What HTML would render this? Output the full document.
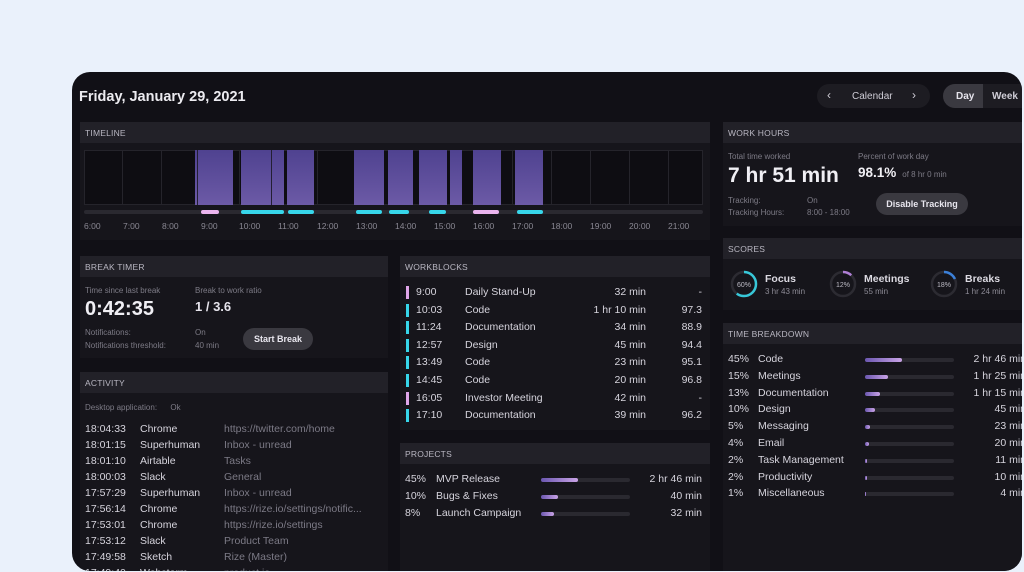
<!DOCTYPE html>
<html><head><meta charset="utf-8"><style>
*{margin:0;padding:0;box-sizing:border-box}
body{width:1024px;height:572px;background:#eaf1fb;position:relative;overflow:hidden;font-family:"Liberation Sans",sans-serif;color:#e6e4ec}
.win{position:absolute;left:72px;top:72px;width:950px;height:499px;background:#111016;border-radius:18px;overflow:hidden}
.a{position:absolute}
.p{position:absolute;background:#16151b}
.h{position:absolute;left:0;right:0;top:0;height:21px;background:#222128;font-size:8.5px;color:#b9b7c2;padding:6px 0 0 5px;letter-spacing:.2px}
.s{font-size:10.5px;color:#dcdae2;white-space:nowrap}
.g{color:#7c7a86}
.t{font-size:8px;color:#7d7b86;white-space:nowrap}
.blk{position:absolute;top:78px;height:55px;background:linear-gradient(#4f4290,#6c5aa6)}
.bar{position:absolute;top:138px;height:4px;border-radius:2px}
.lab{position:absolute;top:149px;font-size:8.5px;color:#8a8893}
.btn{position:absolute;background:#3a3940;border-radius:11px;font-size:9px;font-weight:bold;color:#e8e6ee;text-align:center}
.row{position:absolute;left:0;right:0;height:17px;font-size:10.5px;color:#d6d4dd;white-space:nowrap}
.row span{position:absolute}
.trk{position:absolute;height:4px;background:#2a2930;border-radius:2px}
.fill{position:absolute;left:0;top:0;height:4px;border-radius:2px;background:linear-gradient(90deg,#6b57b0,#c9a3e6)}
</style></head><body>
<div class="win">
<div class="a" style="left:7px;top:17px;font-size:14.5px;font-weight:bold;color:#ecebf0">Friday, January 29, 2021</div>
<div class="a" style="left:745px;top:12px;width:113px;height:24px;background:#1d1c22;border-radius:12px;font-size:10px;color:#cfcdd6"><span class="a" style="left:10px;top:4px;font-size:12px">‹</span><span class="a" style="left:35px;top:7px">Calendar</span><span class="a" style="left:95px;top:4px;font-size:12px">›</span></div>
<div class="a" style="left:871px;top:12px;width:90px;height:24px;background:#1d1c22;border-radius:12px;font-size:10px;font-weight:bold"><div class="a" style="left:0;top:0;width:40px;height:24px;background:#3a3940;border-radius:12px 0 0 12px"></div><span class="a" style="left:13px;top:7px">Day</span><span class="a" style="left:49px;top:7px;color:#cfcdd6">Week</span></div>

<div class="p" style="left:8px;top:50px;width:630px;height:118px"><div class="h">TIMELINE</div></div>
<div class="a" style="left:12px;top:78px;width:619px;height:55px;background:#0e0d12;border:1px solid #25242b"></div>
<div class="a" style="left:12px;top:78px;width:619px;height:55px;background:repeating-linear-gradient(90deg,transparent 0 38px,#25242b 38px 39px)"></div>
<div class="blk" style="left:123px;width:38px"></div><div class="a" style="left:125px;top:78px;width:1px;height:55px;background:#231f33"></div>
<div class="blk" style="left:169px;width:43px"></div><div class="a" style="left:199px;top:78px;width:1px;height:55px;background:#231f33"></div>
<div class="blk" style="left:215px;width:27px"></div>
<div class="blk" style="left:282px;width:30px"></div>
<div class="blk" style="left:316px;width:25px"></div>
<div class="blk" style="left:347px;width:28px"></div>
<div class="blk" style="left:378px;width:12px"></div>
<div class="blk" style="left:401px;width:28px"></div>
<div class="blk" style="left:443px;width:28px"></div>
<div class="bar" style="left:12px;width:619px;background:#2a2930"></div>
<div class="bar" style="left:129px;width:18px;background:#eab4ee"></div>
<div class="bar" style="left:169px;width:43px;background:#37d6ea"></div>
<div class="bar" style="left:216px;width:26px;background:#37d6ea"></div>
<div class="bar" style="left:284px;width:26px;background:#37d6ea"></div>
<div class="bar" style="left:317px;width:20px;background:#37d6ea"></div>
<div class="bar" style="left:357px;width:17px;background:#37d6ea"></div>
<div class="bar" style="left:401px;width:26px;background:#eab4ee"></div>
<div class="bar" style="left:445px;width:26px;background:#37d6ea"></div>
<div class="lab" style="left:12px">6:00</div><div class="lab" style="left:51px">7:00</div><div class="lab" style="left:90px">8:00</div><div class="lab" style="left:129px">9:00</div><div class="lab" style="left:167px">10:00</div><div class="lab" style="left:206px">11:00</div><div class="lab" style="left:245px">12:00</div><div class="lab" style="left:284px">13:00</div><div class="lab" style="left:323px">14:00</div><div class="lab" style="left:362px">15:00</div><div class="lab" style="left:401px">16:00</div><div class="lab" style="left:440px">17:00</div><div class="lab" style="left:479px">18:00</div><div class="lab" style="left:518px">19:00</div><div class="lab" style="left:557px">20:00</div><div class="lab" style="left:596px">21:00</div>

<div class="p" style="left:651px;top:50px;width:310px;height:104px"><div class="h">WORK HOURS</div>
<div class="t a" style="left:5px;top:30px">Total time worked</div>
<div class="a" style="left:5px;top:42px;font-size:21px;font-weight:bold;color:#f0eff4">7 hr 51 min</div>
<div class="t a" style="left:5px;top:74px">Tracking:</div><div class="t a" style="left:84px;top:74px">On</div>
<div class="t a" style="left:5px;top:86px">Tracking Hours:</div><div class="t a" style="left:84px;top:86px">8:00 - 18:00</div>
<div class="t a" style="left:135px;top:30px">Percent of work day</div>
<div class="a" style="left:135px;top:43px;font-size:13.5px;font-weight:bold;color:#f0eff4">98.1% <span style="font-size:8px;font-weight:normal;color:#7d7b86">&nbsp;of 8 hr 0 min</span></div>
<div class="btn" style="left:153px;top:71px;width:92px;height:22px;line-height:22px">Disable Tracking</div>
</div>
<div class="p" style="left:651px;top:166px;width:310px;height:72px"><div class="h">SCORES</div>
<svg class="a" style="left:7px;top:32px" width="28" height="28"><circle cx="14" cy="14" r="12" fill="none" stroke="#2c2b32" stroke-width="2.5"/><circle cx="14" cy="14" r="12" fill="none" stroke="#37c7d8" stroke-width="2.5" stroke-dasharray="45.2 75.4" transform="rotate(-90 14 14)"/><text x="14" y="17" font-size="7" fill="#bdbbc5" text-anchor="middle" font-family="Liberation Sans">60%</text></svg>
<div class="a s" style="left:42px;top:35px;font-weight:bold">Focus</div><div class="a t" style="left:42px;top:49px;color:#8e8c97">3 hr 43 min</div>
<svg class="a" style="left:106px;top:32px" width="28" height="28"><circle cx="14" cy="14" r="12" fill="none" stroke="#2c2b32" stroke-width="2.5"/><circle cx="14" cy="14" r="12" fill="none" stroke="#b07fd6" stroke-width="2.5" stroke-dasharray="9 75.4" transform="rotate(-90 14 14)"/><text x="14" y="17" font-size="7" fill="#bdbbc5" text-anchor="middle" font-family="Liberation Sans">12%</text></svg>
<div class="a s" style="left:141px;top:35px;font-weight:bold">Meetings</div><div class="a t" style="left:141px;top:49px;color:#8e8c97">55 min</div>
<svg class="a" style="left:207px;top:32px" width="28" height="28"><circle cx="14" cy="14" r="12" fill="none" stroke="#2c2b32" stroke-width="2.5"/><circle cx="14" cy="14" r="12" fill="none" stroke="#3b7fd8" stroke-width="2.5" stroke-dasharray="13.6 75.4" transform="rotate(-90 14 14)"/><text x="14" y="17" font-size="7" fill="#bdbbc5" text-anchor="middle" font-family="Liberation Sans">18%</text></svg>
<div class="a s" style="left:242px;top:35px;font-weight:bold">Breaks</div><div class="a t" style="left:242px;top:49px;color:#8e8c97">1 hr 24 min</div>
</div>
<div class="p" style="left:651px;top:251px;width:310px;height:260px"><div class="h">TIME BREAKDOWN</div>
<div id="tb"></div>
</div>

<div class="p" style="left:8px;top:184px;width:308px;height:102px"><div class="h">BREAK TIMER</div>
<div class="t a" style="left:5px;top:30px">Time since last break</div>
<div class="a" style="left:5px;top:42px;font-size:20px;font-weight:bold;color:#f0eff4">0:42:35</div>
<div class="t a" style="left:5px;top:72px">Notifications:</div><div class="t a" style="left:115px;top:72px">On</div>
<div class="t a" style="left:5px;top:85px">Notifications threshold:</div><div class="t a" style="left:115px;top:85px">40 min</div>
<div class="t a" style="left:115px;top:30px">Break to work ratio</div>
<div class="a" style="left:115px;top:43px;font-size:13px;font-weight:bold;color:#e6e4ec">1 / 3.6</div>
<div class="btn" style="left:163px;top:72px;width:70px;height:22px;line-height:22px">Start Break</div>
</div>
<div class="p" style="left:8px;top:300px;width:308px;height:230px"><div class="h">ACTIVITY</div>
<div class="t a" style="left:5px;top:31px">Desktop application: &nbsp;&nbsp;&nbsp;&nbsp;&nbsp;Ok</div>
<div id="act"></div>
</div>

<div class="p" style="left:328px;top:184px;width:310px;height:174px"><div class="h">WORKBLOCKS</div><div id="wb"></div></div>
<div class="p" style="left:328px;top:371px;width:310px;height:150px"><div class="h">PROJECTS</div><div id="pr"></div></div>
</div>
<script>
function add(id,html){document.getElementById(id).innerHTML=html}
var a=[["18:04:33","Chrome","https://twitter.com/home"],["18:01:15","Superhuman","Inbox - unread"],["18:01:10","Airtable","Tasks"],["18:00:03","Slack","General"],["17:57:29","Superhuman","Inbox - unread"],["17:56:14","Chrome","https://rize.io/settings/notific..."],["17:53:01","Chrome","https://rize.io/settings"],["17:53:12","Slack","Product Team"],["17:49:58","Sketch","Rize (Master)"],["17:49:40","Webstorm","product.io"]];
add("act",a.map((r,i)=>`<div class="row" style="top:${51+i*16}px"><span style="left:5px">${r[0]}</span><span style="left:60px">${r[1]}</span><span class="g" style="left:144px">${r[2]}</span></div>`).join(""));
var w=[["9:00","Daily Stand-Up","32 min","-",1],["10:03","Code","1 hr 10 min","97.3"],["11:24","Documentation","34 min","88.9"],["12:57","Design","45 min","94.4"],["13:49","Code","23 min","95.1"],["14:45","Code","20 min","96.8"],["16:05","Investor Meeting","42 min","-",1],["17:10","Documentation","39 min","96.2"]];
add("wb",w.map((r,i)=>`<div class="row" style="top:${30+i*17.6}px"><span style="left:6px;top:0;width:3px;height:13px;background:${r[4]?'#e0a6ea':'#37d6ea'}"></span><span style="left:16px">${r[0]}</span><span style="left:65px">${r[1]}</span><span style="right:64px">${r[2]}</span><span style="right:8px">${r[3]}</span></div>`).join(""));
var p=[["45%","MVP Release",37,"2 hr 46 min"],["10%","Bugs & Fixes",17,"40 min"],["8%","Launch Campaign",13,"32 min"]];
add("pr",p.map((r,i)=>`<div class="row" style="top:${30+i*17}px"><span style="left:5px">${r[0]}</span><span style="left:36px">${r[1]}</span><span class="trk" style="left:141px;top:5px;width:89px"><span class="fill" style="width:${r[2]}px"></span></span><span style="right:8px">${r[3]}</span></div>`).join(""));
var t=[["45%","Code",37,"2 hr 46 min"],["15%","Meetings",23,"1 hr 25 min"],["13%","Documentation",15,"1 hr 15 min"],["10%","Design",10,"45 min"],["5%","Messaging",5,"23 min"],["4%","Email",4,"20 min"],["2%","Task Management",2,"11 min"],["2%","Productivity",2,"10 min"],["1%","Miscellaneous",1,"4 min"]];
add("tb",t.map((r,i)=>`<div class="row" style="top:${30+i*16.8}px"><span style="left:5px">${r[0]}</span><span style="left:35px">${r[1]}</span><span class="trk" style="left:142px;top:5px;width:89px"><span class="fill" style="width:${r[2]}px"></span></span><span style="left:248px;width:55px;text-align:right">${r[3]}</span></div>`).join(""));
</script>
</body></html>
